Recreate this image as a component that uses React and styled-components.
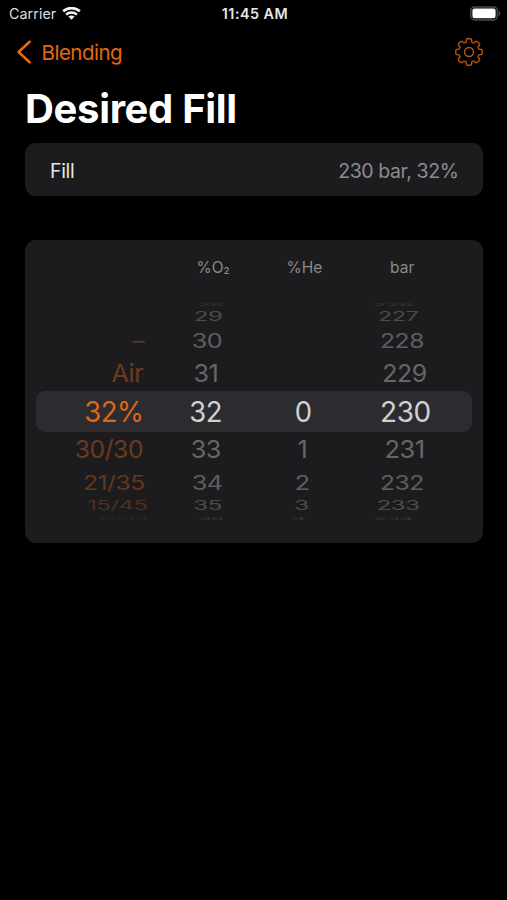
import React from "react";
import styled, { createGlobalStyle } from "styled-components";

const GlobalStyle = createGlobalStyle`
  * { box-sizing: border-box; }
  body {
    margin: 0;
    background: #000;
    color: #fff;
    font-family: Inter, "Liberation Sans", sans-serif;
  }
`;

const Screen = styled.div`
  width: 507px;
  height: 900px;
  background: #000;
  overflow: hidden;
`;

const StatusBar = styled.header`
  display: grid;
  grid-template-columns: 1fr auto 1fr;
  align-items: center;
  height: 27px;
  padding: 0 6px 0 9px;
`;

const Carrier = styled.span`
  display: flex;
  align-items: center;
  gap: 5.5px;
  font-size: 14.3px;
  line-height: 18px;
  letter-spacing: 0.05px;
  color: #dedede;
`;

const Clock = styled.time`
  font-size: 14.3px;
  line-height: 18px;
  font-weight: 600;
  letter-spacing: 0.5px;
  color: #e8e8e8;
`;

const BatterySlot = styled.span`
  display: flex;
  justify-content: flex-end;
`;

const NavBar = styled.nav`
  display: flex;
  align-items: center;
  justify-content: space-between;
  height: 50px;
  padding: 0 24px 0 16px;
`;

const BackButton = styled.button`
  display: flex;
  align-items: center;
  gap: 9.5px;
  padding: 0;
  border: 0;
  background: none;
  color: #e5690f;
  font: 400 20.5px/26px Inter, "Liberation Sans", sans-serif;
  letter-spacing: -0.5px;
`;

const BackLabel = styled.span`
  padding-top: 1px;
`;

const IconButton = styled.button`
  display: flex;
  padding: 0;
  border: 0;
  background: none;
  color: #b9540e;
`;

const Title = styled.h1`
  margin: 7px 0 0 25px;
  height: 58.5px;
  font-size: 40px;
  line-height: 50px;
  font-weight: 700;
  letter-spacing: -0.33px;
`;

const Card = styled.section`
  margin: 0 24.5px 0 25.4px;
  border-radius: 11px;
  background: #1c1c1e;
`;

const SummaryCard = styled(Card)`
  display: flex;
  align-items: center;
  justify-content: space-between;
  height: 53.5px;
  padding: 3px 24px 0 24.5px;
  font-size: 19.5px;
  line-height: 26px;
`;

const SummaryLabel = styled.span`
  color: #e6e6e6;
  letter-spacing: -0.25px;
`;

const SummaryValue = styled.span`
  color: #8c8c91;
  letter-spacing: -0.4px;
`;

const PickerCard = styled(Card)`
  margin-top: 44px;
  height: 303px;
  padding: 18px 11.5px 0 11px;
`;

const Headings = styled.div`
  display: grid;
  grid-template-columns: 117px 119px 65px 1fr;
  height: 43px;
  font-size: 15.5px;
  line-height: 20px;
  color: #8a8a8e;
`;

const Heading = styled.span`
  text-align: center;
  transform: translateX(${(p) => p.$shift || 0}px);
  sub {
    font-size: 9px;
    font-weight: 600;
    line-height: 0;
    vertical-align: -1px;
  }
`;

const Wheel = styled.div`
  display: grid;
  grid-template-rows: 8px 16px 31px 35px 41px 36px 29px 18px 7px;
`;

const WheelRow = styled.div`
  display: grid;
  grid-template-columns: 107px 125px 68px 136px;
  align-items: center;
  width: 435.5px;
  border-radius: 9px;
  background: ${(p) => (p.$selected ? "#2c2c30" : "transparent")};
`;

const WheelValue = styled.span`
  height: 34px;
  margin: -20px 0;
  justify-self: ${(p) => (p.$end ? "end" : "center")};
  white-space: nowrap;
  font-size: 28px;
  line-height: 34px;
  letter-spacing: -0.5px;
  color: ${(p) => (p.$accent ? "#dc6718" : "#d0d0d3")};
  opacity: ${(p) => p.$opacity};
  transform-origin: ${(p) => (p.$end ? "right" : "center")} center;
  transform: translate(${(p) => p.$shift}px, -0.5px) scale(${(p) => p.$sx}, ${(p) => p.$sy});
`;

const PRESET = 0;

/* Vertical foreshortening and fading of each drum position, top to bottom. */
const positions = [
  { sy: 0.12, opacity: 0.14, sx: [0.9, 0.78, 0.78, 0.8], shift: [5, 5, -4, -11] },
  { sy: 0.45, opacity: 0.26, sx: [0.86, 0.86, 0.86, 0.83], shift: [5, 2.5, -1, -6] },
  { sy: 0.7, opacity: 0.37, sx: [0.88, 0.9, 0.9, 0.88], shift: [1, 1, 0, -2] },
  { sy: 0.88, opacity: 0.41, sx: [0.9, 0.9, 0.9, 0.89], shift: [0, 0, 0, 0.5] },
  { sy: 1, opacity: 1, sx: [0.98, 0.98, 0.98, 1], shift: [0, 0, 0.5, 1] },
  { sy: 0.88, opacity: 0.41, sx: [0.88, 0.9, 0.9, 0.91], shift: [-0.5, 0, 0, 0.5] },
  { sy: 0.7, opacity: 0.37, sx: [0.88, 0.9, 0.9, 0.88], shift: [1.5, 1, 0, -2] },
  { sy: 0.45, opacity: 0.26, sx: [0.85, 0.86, 0.86, 0.85], shift: [4.5, 2, -1, -6] },
  { sy: 0.12, opacity: 0.14, sx: [0.72, 0.78, 0.78, 0.76], shift: [4, 5, -4, -11] },
];

const rows = [
  ["", "28", "", "226"],
  ["", "29", "", "227"],
  ["–", "30", "", "228"],
  ["Air", "31", "", "229"],
  ["32%", "32", "0", "230"],
  ["30/30", "33", "1", "231"],
  ["21/35", "34", "2", "232"],
  ["15/45", "35", "3", "233"],
  ["12/60", "36", "4", "234"],
];

const WifiIcon = () => (
  <svg width="19" height="14" viewBox="0 0 19 14" fill="none" aria-hidden="true">
    <path d="M1.2 4.3C5.8 0 13.2 0 17.8 4.3" stroke="#f4f4f4" strokeWidth="2.7" />
    <path d="M4.1 7.6c2.9-2.8 7.9-2.8 10.8 0" stroke="#f4f4f4" strokeWidth="2.3" />
    <path d="M6.4 9.6c1.8-1.6 4.4-1.6 6.2 0l-3.1 3.1z" fill="#f4f4f4" />
  </svg>
);

const BatteryIcon = () => (
  <svg width="31" height="16" viewBox="0 0 31 16" aria-hidden="true">
    <rect x="0.8" y="0.9" width="26.6" height="13" rx="4" fill="none" stroke="#4c4c4e" strokeWidth="1.5" />
    <rect x="2.4" y="2.6" width="23.2" height="9.6" rx="2.2" fill="#fff" />
    <path d="M28.7 4.9c2 .6 2 4.2 0 4.8z" fill="#555557" />
  </svg>
);

const BackIcon = () => (
  <svg width="16" height="24" viewBox="0 0 16 24" fill="none" aria-hidden="true">
    <path d="M13.6 1.8 2.6 12l11 10.2" stroke="currentColor" strokeWidth="2.6" strokeLinecap="round" strokeLinejoin="round" />
  </svg>
);

const gearPath = (() => {
  const parts = [];
  const at = (radius, degrees) => {
    const a = (degrees * Math.PI) / 180;
    return `${(14 + radius * Math.sin(a)).toFixed(2)} ${(14 - radius * Math.cos(a)).toFixed(2)}`;
  };
  for (let i = 0; i < 8; i += 1) {
    const c = i * 45;
    parts.push(`${i ? "L" : "M"}${at(10.6, c - 15)}`);
    parts.push(`L${at(12.5, c - 12)}Q${at(13.3, c - 11)} ${at(13.3, c - 7)}`);
    parts.push(`L${at(13.3, c + 7)}Q${at(13.3, c + 11)} ${at(12.5, c + 12)}`);
    parts.push(`L${at(10.6, c + 15)}Q${at(9.5, c + 22.5)} ${at(10.6, c + 30)}`);
  }
  return `${parts.join("")}Z`;
})();

const GearIcon = () => (
  <svg width="28" height="28" viewBox="0 0 28 28" fill="none" stroke="currentColor" strokeWidth="1.4" strokeLinejoin="round" aria-hidden="true">
    <path d={gearPath} />
    <circle cx="14" cy="14" r="4.5" />
  </svg>
);

export default function App() {
  return (
    <Screen>
      <GlobalStyle />
      <StatusBar>
        <Carrier>
          Carrier
          <WifiIcon />
        </Carrier>
        <Clock>11:45 AM</Clock>
        <BatterySlot>
          <BatteryIcon />
        </BatterySlot>
      </StatusBar>
      <NavBar>
        <BackButton>
          <BackIcon />
          <BackLabel>Blending</BackLabel>
        </BackButton>
        <IconButton aria-label="Settings">
          <GearIcon />
        </IconButton>
      </NavBar>
      <Title>Desired Fill</Title>
      <SummaryCard>
        <SummaryLabel>Fill</SummaryLabel>
        <SummaryValue>230 bar, 32%</SummaryValue>
      </SummaryCard>
      <PickerCard>
        <Headings>
          <span />
          <Heading>%O<sub>2</sub></Heading>
          <Heading $shift={-0.5}>%He</Heading>
          <Heading $shift={-2}>bar</Heading>
        </Headings>
        <Wheel>
          {rows.map((row, r) => (
            <WheelRow key={r} $selected={r === 4}>
              {row.map((text, c) => (
                <WheelValue
                  key={c}
                  $end={c === PRESET}
                  $accent={c === PRESET}
                  $opacity={positions[r].opacity}
                  $sx={positions[r].sx[c]}
                  $sy={positions[r].sy}
                  $shift={positions[r].shift[c]}
                >
                  {text}
                </WheelValue>
              ))}
            </WheelRow>
          ))}
        </Wheel>
      </PickerCard>
    </Screen>
  );
}
